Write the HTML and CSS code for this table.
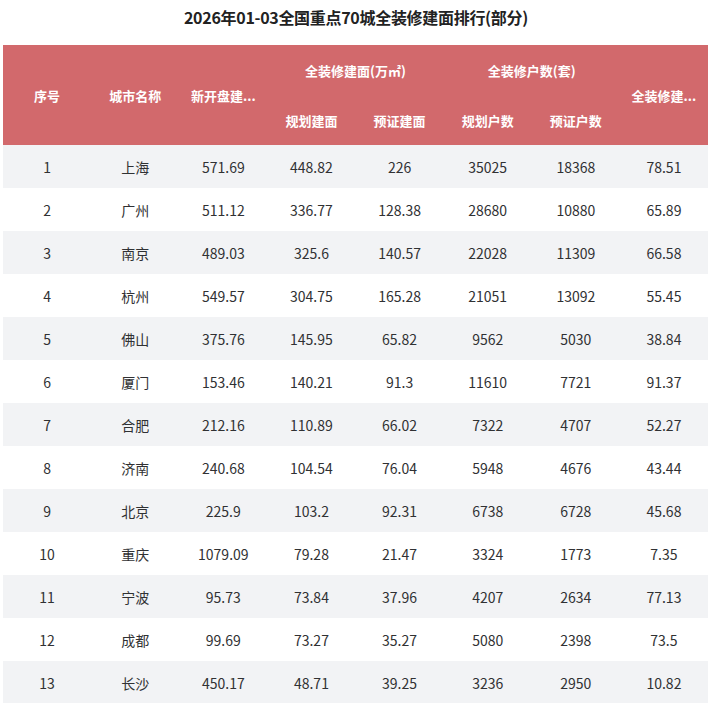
FILE: index.html
```html
<!DOCTYPE html>
<html lang="zh">
<head>
<meta charset="utf-8">
<title>全装修建面排行</title>
<link rel="stylesheet" href="styles.css">
</head>
<body>
<div class="page">
  <h1 class="title">2026年01-03全国重点70城全装修建面排行(部分)</h1>
  <table class="rank">
    <colgroup>
      <col><col><col><col><col><col><col><col>
    </colgroup>
    <thead>
      <tr>
        <th rowspan="2">序号</th>
        <th rowspan="2">城市名称</th>
        <th rowspan="2" title="新开盘建面(万㎡)">新开盘建...</th>
        <th colspan="2">全装修建面(万㎡)</th>
        <th colspan="2">全装修户数(套)</th>
        <th rowspan="2" title="全装修建面占比(%)">全装修建...</th>
      </tr>
      <tr>
        <th>规划建面</th>
        <th>预证建面</th>
        <th>规划户数</th>
        <th>预证户数</th>
      </tr>
    </thead>
    <tbody>
      <tr><td>1</td><td>上海</td><td>571.69</td><td>448.82</td><td>226</td><td>35025</td><td>18368</td><td>78.51</td></tr>
      <tr><td>2</td><td>广州</td><td>511.12</td><td>336.77</td><td>128.38</td><td>28680</td><td>10880</td><td>65.89</td></tr>
      <tr><td>3</td><td>南京</td><td>489.03</td><td>325.6</td><td>140.57</td><td>22028</td><td>11309</td><td>66.58</td></tr>
      <tr><td>4</td><td>杭州</td><td>549.57</td><td>304.75</td><td>165.28</td><td>21051</td><td>13092</td><td>55.45</td></tr>
      <tr><td>5</td><td>佛山</td><td>375.76</td><td>145.95</td><td>65.82</td><td>9562</td><td>5030</td><td>38.84</td></tr>
      <tr><td>6</td><td>厦门</td><td>153.46</td><td>140.21</td><td>91.3</td><td>11610</td><td>7721</td><td>91.37</td></tr>
      <tr><td>7</td><td>合肥</td><td>212.16</td><td>110.89</td><td>66.02</td><td>7322</td><td>4707</td><td>52.27</td></tr>
      <tr><td>8</td><td>济南</td><td>240.68</td><td>104.54</td><td>76.04</td><td>5948</td><td>4676</td><td>43.44</td></tr>
      <tr><td>9</td><td>北京</td><td>225.9</td><td>103.2</td><td>92.31</td><td>6738</td><td>6728</td><td>45.68</td></tr>
      <tr><td>10</td><td>重庆</td><td>1079.09</td><td>79.28</td><td>21.47</td><td>3324</td><td>1773</td><td>7.35</td></tr>
      <tr><td>11</td><td>宁波</td><td>95.73</td><td>73.84</td><td>37.96</td><td>4207</td><td>2634</td><td>77.13</td></tr>
      <tr><td>12</td><td>成都</td><td>99.69</td><td>73.27</td><td>35.27</td><td>5080</td><td>2398</td><td>73.5</td></tr>
      <tr><td>13</td><td>长沙</td><td>450.17</td><td>48.71</td><td>39.25</td><td>3236</td><td>2950</td><td>10.82</td></tr>
    </tbody>
  </table>
</div>
</body>
</html>
```

FILE: styles.css
```css
html, body {
  margin: 0;
  padding: 0;
  background: #ffffff;
}

body {
  font-family: "Noto Sans CJK SC", "Noto Sans", sans-serif;
  color: #303133;
}

.page {
  width: 712px;
  overflow: hidden;
}

.title {
  margin: 0 0 11px 0;
  height: 34px;
  line-height: 34px;
  font-size: 16px;
  font-weight: 700;
  text-align: center;
  color: #222222;
  letter-spacing: -0.3px;
}

.rank {
  margin-left: 3px;
  width: 705px;
  table-layout: fixed;
  border-collapse: collapse;
  border-spacing: 0;
}

.rank th {
  background: #d2696c;
  color: #ffffff;
  font-size: 13px;
  font-weight: 700;
  height: 50px;
  padding: 0 2px;
  text-align: center;
  vertical-align: middle;
  white-space: nowrap;
}

.rank td {
  height: 43px;
  padding: 0 4px;
  font-size: 14px;
  text-align: center;
  vertical-align: middle;
  white-space: nowrap;
}

.rank tbody tr:nth-child(odd) td {
  background: #f2f3f5;
}
```
